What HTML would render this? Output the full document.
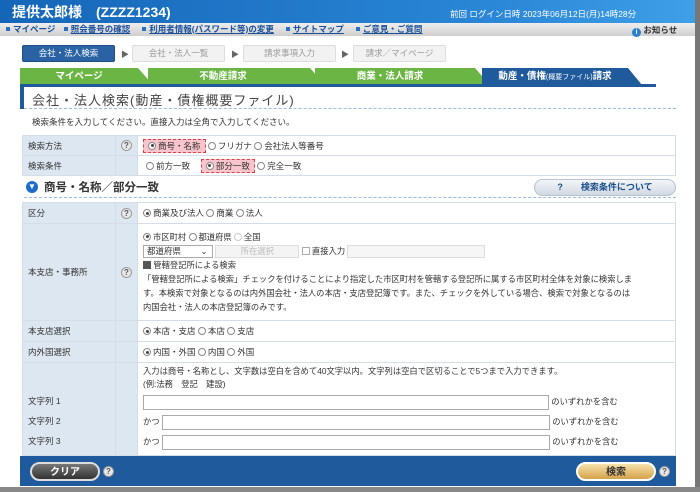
<!DOCTYPE html><html><head><meta charset="utf-8"><style>
*{box-sizing:border-box;margin:0;padding:0}
body{width:700px;height:492px;overflow:hidden;background:#fff;font-family:"Liberation Sans","Noto Sans CJK JP",sans-serif;font-size:9px;color:#333;position:relative}
.a{position:absolute}
.hdr{left:0;top:0;width:700px;height:23px;background:linear-gradient(90deg,#1566b8,#2a86d6 70%,#3fa0e8)}
.nav{left:0;top:23px;width:700px;height:13px;background:linear-gradient(#eee,#cfcfcf);font-size:8.5px;font-weight:bold;color:#1a4f9a;line-height:13px;white-space:nowrap}
.nav u{margin-right:6px}
.sq{display:inline-block;width:4px;height:4px;background:#2a6fc0;margin:0 3px 1px 6px;vertical-align:middle}
.step{top:45px;height:17px;border:1px solid #ddd;background:#f2f2f2;color:#999;border-radius:2px;text-align:center;line-height:15px;font-size:8.5px}
.tri{top:49px;font-size:8px;color:#666}
.tab{top:68px;height:17px;color:#fff;font-weight:bold;font-size:9.5px;line-height:17px;text-align:center}
table{border-collapse:collapse;position:absolute}
td{border:1px solid #d5dde6;font-size:8.5px;padding:0 5px;vertical-align:middle}
td.l{background:#dde7f1;width:93px}
td.q{background:#dde7f1;width:22px;text-align:center;padding:0}
.qi{display:inline-block;width:11px;height:11px;border-radius:50%;background:#e8e8e8;border:1px solid #999;font-size:8px;line-height:9px;text-align:center;font-weight:bold;color:#555}
.r{display:inline-block;width:8px;height:8px;border:1px solid #888;border-radius:50%;vertical-align:-1px;margin-right:2px;background:#fff;position:relative}
.r.on:after{content:"";position:absolute;left:1.5px;top:1.5px;width:3px;height:3px;border-radius:50%;background:#444}
.hl{background:#f9c5cc;border:1px dashed #e0404a;padding:1px 4px}
.in{display:inline-block;height:13px;border:1px solid #aaa;background:#fff;vertical-align:middle}
.btn{border-radius:12px;height:19px;text-align:center;line-height:17px;font-weight:bold;font-size:10px}
</style></head><body>
<div class="a hdr"></div>
<div class="a" style="left:12px;top:2px;color:#fff;font-size:14px;font-weight:bold">提供太郎様　(ZZZZ1234)</div>
<div class="a" style="left:450px;top:8px;color:#fff;font-size:8.5px">前回 ログイン日時 2023年06月12日(月)14時28分</div>
<div class="a nav"><span class="sq"></span>マイページ <span class="sq"></span><u>照会番号の確認</u><span class="sq"></span><u>利用者情報(パスワード等)の変更</u><span class="sq"></span><u>サイトマップ</u><span class="sq"></span><u>ご意見・ご質問</u></div>
<div class="a" style="left:632px;top:25px;font-size:8.5px;font-weight:bold;color:#333;line-height:10px"><span style="display:inline-block;width:9px;height:9px;border-radius:50%;background:#2a7fd0;color:#fff;font-size:7px;text-align:center;line-height:9px;vertical-align:-1px">i</span> お知らせ</div>
<div class="a step" style="left:22px;width:93px;background:#2a62a4;border-color:#1d4f8a;color:#fff">会社・法人検索</div>
<div class="a tri" style="left:121px">▶</div>
<div class="a step" style="left:132px;width:93px">会社・法人一覧</div>
<div class="a tri" style="left:231px">▶</div>
<div class="a step" style="left:243px;width:93px">請求事項入力</div>
<div class="a tri" style="left:341px">▶</div>
<div class="a step" style="left:353px;width:93px">請求／マイページ</div>
<svg class="a" style="left:20px;top:68px" width="638" height="20">
<polygon points="0,0 118,0 133,17 0,17" fill="#6bb545"/>
<polygon points="128,0 290,0 305,17 128,17" fill="#6bb545"/>
<polygon points="295,0 455,0 470,17 295,17" fill="#6bb545"/>
<polygon points="462,0 608,0 622,17 462,17" fill="#1e5a9c"/>
<rect x="0" y="16" width="636" height="3" fill="#1e5a9c"/>
</svg>
<div class="a tab" style="left:20px;width:118px">マイページ</div>
<div class="a tab" style="left:148px;width:150px">不動産請求</div>
<div class="a tab" style="left:315px;width:150px">商業・法人請求</div>
<div class="a tab" style="left:482px;width:146px">動産・債権<span style="font-size:7px;font-weight:normal">(概要ファイル)</span>請求</div>
<div class="a" style="left:20px;top:87px;width:4px;height:22px;background:#1e5a9c"></div>
<div class="a" style="left:32px;top:90px;font-size:13px;color:#444;letter-spacing:1px">会社・法人検索(動産・債権概要ファイル)</div>
<div class="a" style="left:24px;top:108px;width:652px;border-top:1px dashed #9bbbe0"></div>
<div class="a" style="left:32px;top:116px;font-size:8.5px">検索条件を入力してください。直接入力は全角で入力してください。</div>
<table style="left:22px;top:135px;width:654px">
<tr style="height:20px"><td class="l">検索方法</td><td class="q"><span class="qi">?</span></td><td><span class="hl"><span class="r on"></span>商号・名称</span> <span class="r"></span>フリガナ <span class="r"></span>会社法人等番号</td></tr>
<tr style="height:20px"><td class="l">検索条件</td><td class="q"></td><td style="padding-left:8px"><span class="r"></span>前方一致 　<span class="hl"><span class="r on"></span>部分一致</span> <span class="r"></span>完全一致</td></tr>
</table>
<div class="a" style="left:26px;top:181px;width:12px;height:12px;border-radius:50%;background:#1e6ec8;color:#fff;font-size:8px;text-align:center;line-height:12px">▼</div>
<div class="a" style="left:44px;top:179px;font-size:11.5px;font-weight:bold;color:#333">商号・名称／部分一致</div>
<div class="a btn" style="left:534px;top:179px;width:142px;height:17px;line-height:15px;font-size:9px;background:linear-gradient(#f4f6f8,#cfd8e2);border:1px solid #b8c4d0;color:#1a4f8a">?　　検索条件について</div>
<div class="a" style="left:24px;top:197px;width:652px;border-top:1px dashed #9bbbe0"></div>
<table style="left:22px;top:202px;width:654px">
<tr style="height:21px"><td class="l">区分</td><td class="q"><span class="qi">?</span></td><td><span class="r on"></span>商業及び法人 <span class="r"></span>商業 <span class="r"></span>法人</td></tr>
<tr style="height:97px"><td class="l">本支店・事務所</td><td class="q"><span class="qi">?</span></td><td style="line-height:14px;font-size:8.3px">
<span class="r on"></span>市区町村 <span class="r"></span>都道府県 <span class="r" style="border-color:#ccc"></span>全国<br>
<span class="in" style="width:70px;font-size:8.5px;line-height:11px;padding-left:3px">都道府県　　 ⌄</span> <span class="in" style="width:84px;background:#f4f4f4;border-color:#ddd;color:#bbb;text-align:center;line-height:11px">所在選択</span> <span style="display:inline-block;width:8px;height:8px;border:1px solid #aaa;vertical-align:-1px"></span> 直接入力 <span class="in" style="width:138px;background:#f6f6f6;border-color:#ddd"></span><br>
<span style="display:inline-block;width:8px;height:8px;border:1px solid #555;background:#555;vertical-align:-1px"></span> 管轄登記所による検索<br>
「管轄登記所による検索」チェックを付けることにより指定した市区町村を管轄する登記所に属する市区町村全体を対象に検索しま<br>す。本検索で対象となるのは内外国会社・法人の本店・支店登記簿です。また、チェックを外している場合、検索で対象となるのは<br>内国会社・法人の本店登記簿のみです。</td></tr>
<tr style="height:21px"><td class="l">本支店選択</td><td class="q"></td><td><span class="r on"></span>本店・支店 <span class="r"></span>本店 <span class="r"></span>支店</td></tr>
<tr style="height:21px"><td class="l">内外国選択</td><td class="q"></td><td><span class="r on"></span>内国・外国 <span class="r"></span>内国 <span class="r"></span>外国</td></tr>
<tr style="height:93px"><td class="l" style="vertical-align:bottom;line-height:20px;padding-bottom:4px">文字列 1<br>文字列 2<br>文字列 3</td><td class="q"></td><td style="line-height:13px;font-size:8.3px;vertical-align:top;padding-top:2px">入力は商号・名称とし、文字数は空白を含めて40文字以内。文字列は空白で区切ることで5つまで入力できます。<br>(例:法務　登記　建設)<br>
<div style="margin-top:4px;height:20px"><span class="in" style="width:406px;height:15px"></span> のいずれかを含む</div>
<div style="height:20px">かつ <span class="in" style="width:388px;height:15px"></span> のいずれかを含む</div>
<div style="height:20px">かつ <span class="in" style="width:388px;height:15px"></span> のいずれかを含む</div></td></tr>
</table>
<div class="a" style="left:20px;top:456px;width:656px;height:30px;background:#1e5a9c"></div>
<div class="a btn" style="left:30px;top:462px;width:70px;background:linear-gradient(#777,#333);border:2px solid #ddd;color:#fff">クリア</div>
<div class="a qi" style="left:103px;top:466px">?</div>
<div class="a btn" style="left:576px;top:462px;width:80px;background:linear-gradient(#f6e2a8,#d4a24a);border:2px solid #fff;color:#333">検索</div>
<div class="a qi" style="left:659px;top:466px">?</div>
<div class="a" style="left:695px;top:0;width:5px;height:492px;background:#777"></div>
<div class="a" style="left:0;top:487px;width:700px;height:5px;background:#888"></div>
</body></html>
